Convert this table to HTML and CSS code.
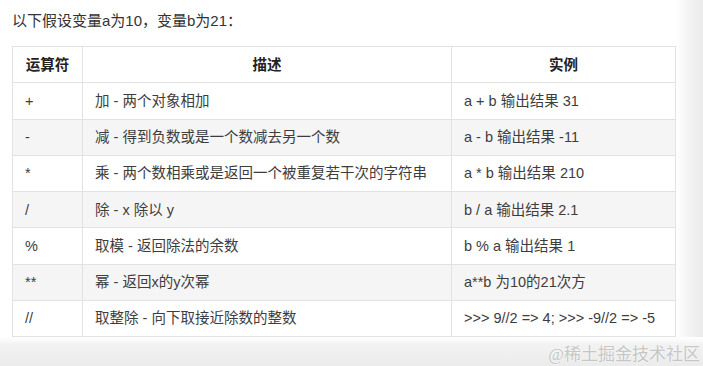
FILE: index.html
```html
<!DOCTYPE html>
<html lang="zh">
<head>
<meta charset="utf-8">
<link rel="stylesheet" href="styles.css">
</head>
<body>
<div class="page">
  <p class="intro">以下假设变量a为10，变量b为21：</p>
  <table class="ops">
    <colgroup><col class="c1"><col class="c2"><col class="c3"></colgroup>
    <thead>
      <tr><th>运算符</th><th>描述</th><th>实例</th></tr>
    </thead>
    <tbody>
      <tr><td>+</td><td>加 - 两个对象相加</td><td>a + b 输出结果 31</td></tr>
      <tr><td>-</td><td>减 - 得到负数或是一个数减去另一个数</td><td>a - b 输出结果 -11</td></tr>
      <tr><td>*</td><td>乘 - 两个数相乘或是返回一个被重复若干次的字符串</td><td>a * b 输出结果 210</td></tr>
      <tr><td>/</td><td>除 - x 除以 y</td><td>b / a 输出结果 2.1</td></tr>
      <tr><td>%</td><td>取模 - 返回除法的余数</td><td>b % a 输出结果 1</td></tr>
      <tr><td>**</td><td>幂 - 返回x的y次幂</td><td>a**b 为10的21次方</td></tr>
      <tr><td>//</td><td>取整除 - 向下取接近除数的整数</td><td>&gt;&gt;&gt; 9//2 =&gt; 4; &gt;&gt;&gt; -9//2 =&gt; -5</td></tr>
    </tbody>
  </table>
  <div class="footer"><span class="mark">@稀土掘金技术社区</span></div>
</div>
</body>
</html>
```

FILE: styles.css
```css
html, body {
  margin: 0;
  padding: 0;
}
body {
  width: 703px;
  height: 366px;
  overflow: hidden;
  background: linear-gradient(90deg, #ffffff 0, #ffffff 676px, #f2f2f2 690px, #ebebeb 703px);
  font-family: "Liberation Sans", "Noto Sans CJK SC", sans-serif;
  color: #333;
}
.page {
  padding: 11px 0 0 12px;
}
.intro {
  margin: 0;
  font-size: 15px;
  line-height: 20px;
  color: #333;
}
.ops {
  margin-top: 15px;
  border-collapse: collapse;
  width: 663px;
  table-layout: fixed;
  font-size: 14.5px;
  background: #fff;
}
.c1 { width: 70px; }
.c2 { width: 369px; }
.c3 { width: 224px; }
.ops th, .ops td {
  border: 1px solid #e2e2e2;
  height: 35.25px;
  padding: 0 12px;
  line-height: 20px;
  text-align: left;
  white-space: nowrap;
  color: #3d3d3d;
}
.ops th {
  text-align: center;
  font-weight: bold;
  color: #222;
}
.ops tbody tr:nth-child(even) td {
  background: #f5f5f5;
}
.footer {
  margin: 0 0 0 -12px;
  height: 30px;
  background: linear-gradient(180deg, #ffffff 0, #f2f2f2 8px, #ebebeb 100%);
  display: flex;
  justify-content: flex-end;
  align-items: center;
  padding-right: 3px;
}
.mark {
  font-family: "Liberation Serif", "Noto Sans CJK SC", serif;
  font-size: 17px;
  color: #c6c6c6;
  text-shadow: 0 0 2px #ffffff;
}
```
